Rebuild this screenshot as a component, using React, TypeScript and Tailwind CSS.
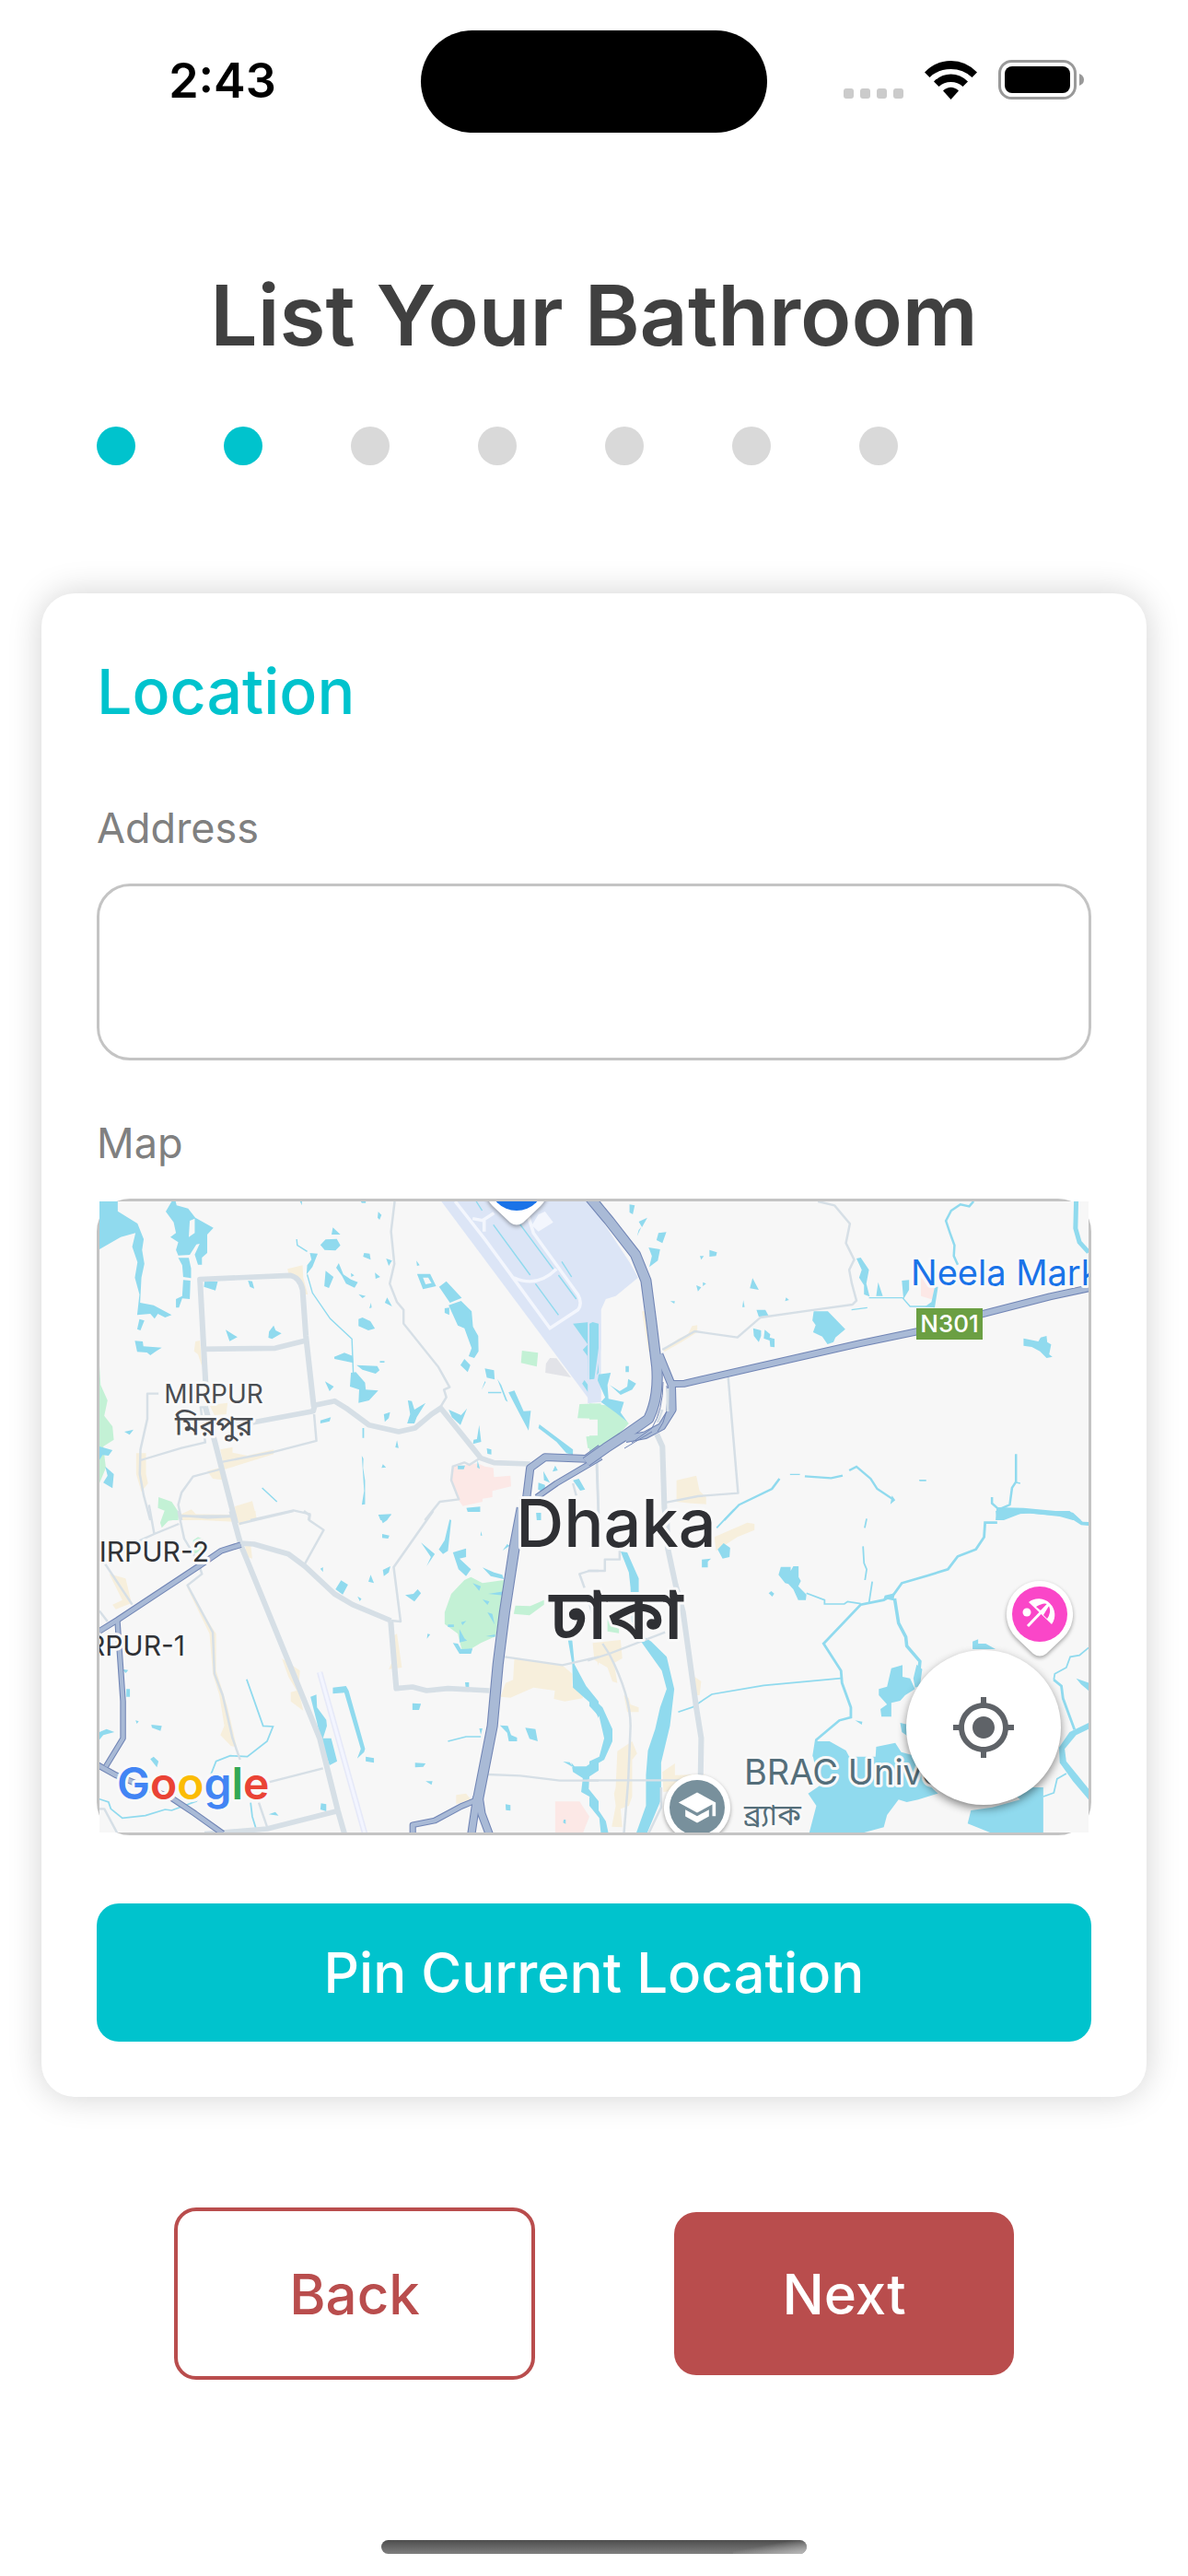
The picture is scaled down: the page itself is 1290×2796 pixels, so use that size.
import { useState } from "react";
import { MdMyLocation, MdSchool } from "react-icons/md";

type Tile = {
  transform: string;
  airport?: string;
  taxiway?: string;
  apron?: string;
  grey?: string;
  green?: string;
  pink?: string;
  cream?: string;
  water: string;
  streams: [number, string][];
  minor: string;
  major: string;
  runway?: string;
  highways: [number, string][];
};

const tiles: Tile[] = [
  {
    transform: "translate(-18 -14) scale(.35714 .33333)",
    airport: "M1090 42H1575V695H1545Z",
    taxiway:
      "M1132 42L1222 165L1420 455L1505 395Q1520 375 1505 345L1370 145L1340 42M1310 290Q1380 325 1440 262M1185 98L1215 104L1250 80M1220 100V140",
    apron: "M1385 85L1405 75L1430 110L1385 140L1365 120Z",
    grey: "M1420 552L1440 553L1484 615L1406 600L1408 570Z",
    green:
      "M1335 528L1384 535L1380 580L1332 568ZM1510 702L1575 700V750L1504 748ZM1530 808L1575 805V855L1535 845ZM50 570L54 640L75 690L65 740L90 775L94 818L62 840L70 910L50 960ZM230 1005L270 1020L292 1055L290 1080H240L250 1050L228 1040Z",
    pink: "M1125 905L1200 895L1222 905L1248 910L1250 940L1300 935L1302 970L1245 985V1005L1215 1010V1020L1155 1034L1140 1010L1120 950Z",
    cream:
      "M622 262L668 250L670 290L684 345L672 345L655 290L625 275ZM342 498L356 495L362 580L350 540L338 530ZM385 705L440 698L436 735L400 738ZM418 850L455 842V860L500 870L580 850V865L430 915ZM378 920L430 905L435 950L395 945ZM162 862H192V930L198 960L178 988L162 930ZM462 1035L515 1018L530 1080H465ZM300 1060L330 1045L345 1062L450 1070V1080H300Z",
    water:
      "M50 42H106V74L166 114L185 165L180 200L187 245L178 290L174 372L215 380L270 412L250 420L228 408L218 424L205 408L165 412L172 345L158 290L166 240L150 190L160 145L115 158L50 198ZM270 42L282 42L285 55L320 65L342 95L397 128L378 150V210L362 225V248L350 248L340 215L355 180L345 182L325 216L290 218L283 200L290 175L266 158L283 145L276 110L252 75ZM325 105L340 98V145L322 158ZM290 226H322L329 260V292L305 288L302 250ZM305 298L327 300L325 360L302 358L292 388H283V360L302 350ZM172 425L187 430L175 462L165 458ZM158 496L182 498L184 514L240 518L222 530L205 543L195 534L165 532ZM370 302L410 303L403 332L368 320ZM502 300L515 302L521 326L508 320ZM434 460L470 484L446 497ZM580 446L586 462L604 472L575 490L564 486L566 466ZM760 127L783 150L756 150ZM738 166L772 164L783 185L768 202L735 200L722 184ZM660 42H666V55ZM845 42h15v5h-12zM898 76L908 86L902 102L896 95ZM690 210L714 212L698 255L680 280L682 250L695 232ZM778 243L792 280L815 296L836 305L826 323L800 310L788 285L770 258ZM738 268L762 288L748 324L734 318ZM855 210L872 212L875 232L852 222ZM922 228L940 235L930 252ZM888 274L904 288L890 294ZM815 275l10 8l-9 5zM838 344L860 350L850 357ZM876 372L878 388L871 390ZM925 355L940 384L918 372ZM850 420L874 432L888 456L868 462L838 448L838 425ZM1014 235L1024 250L1016 252ZM1016 278L1056 278L1074 318L1034 328ZM1034 290L1050 290L1060 308L1042 312ZM1105 302L1152 356L1116 372L1083 320ZM1150 366L1182 400L1186 450L1202 480L1203 530L1190 552L1173 546L1182 520L1160 455L1140 446L1112 380ZM1100 390L1114 388V412L1100 405ZM1160 555L1178 575L1170 598L1148 575ZM1222 586L1250 592L1252 622L1228 616ZM1260 620L1272 640L1292 695L1285 690ZM1232 662h40v5h-40zM1222 628l3 2l-13 26zM1294 664L1312 658L1340 725L1362 724L1355 788L1330 738ZM1388 768L1490 850L1490 868L1470 862L1440 825L1385 780ZM1490 440L1568 432V600L1550 624L1536 620L1534 545L1520 525L1535 508ZM1525 624L1550 660L1540 670L1518 635ZM1112 720L1150 738L1168 716L1148 770L1122 745ZM988 690L1000 692L1008 720L1042 698L1015 745L1008 765L986 765L995 735ZM915 735L934 728L930 748L918 760ZM722 755L754 745L750 758L722 765ZM1205 770L1211 825L1186 832L1188 818L1198 816ZM1228 846L1242 850V866L1230 864ZM764 548L795 535L820 545L822 568L765 555ZM832 575L895 578L902 592L890 603L850 590ZM903 562h14v5h-14zM815 600L830 598L858 632L860 655L898 658L870 690L838 698L840 655L812 645ZM736 628L763 645L750 660ZM126 792L154 785L142 802ZM50 840L90 852L78 870L60 868L50 884ZM68 905L94 930L90 976L62 958L75 935ZM850 780h5v32h-5zM955 820l5 25l-10 -2zM848 870L853 880L852 910L858 950L858 1028L848 1030L855 985ZM912 898l10 10l-14 2zM898 1062L938 1062L920 1080H905ZM1166 1040L1208 1036V1053H1170ZM1140 902l22 0l-4 12l-18 0zM1200 885l7 28l-8 -5zM1436 902l8 16l-16 4zM1400 920L1420 958L1402 950ZM1385 958L1405 965V990L1384 980ZM1490 950L1508 945L1527 980L1512 984ZM1378 1056l15 0v24h-13z",
    streams: [
      [
        4,
        "M650 165L652 185L682 205M682 280L698 340L752 424L818 490L822 600M545 975L590 1020M1196 42L1214 72M1248 118L1360 282M1326 112L1430 262M1376 310L1446 412M1446 282L1500 360M1456 238L1486 288",
      ],
    ],
    minor:
      "M948 42L937 140L947 245L933 310L955 370L975 395V440L1080 580L1115 647L1098 655L1105 680L1088 710M230 668H196V750L175 850L173 930L185 1000L205 1080M175 885L300 845L372 827L358 712H375M703 735L710 822L580 858L425 890M415 915L335 938L300 990L290 1030L300 1080M300 1065L380 1072L450 1068M510 1080L640 1048L690 1060L686 1080M1205 880L1175 900L1160 892L1125 905L1120 950L1143 1012L1085 1020L1040 1080M1563 890L1568 1060M1490 960L1500 1000",
    major:
      "M374 650L356 296L630 283Q660 290 668 330L678 480L702 710M365 523L585 520L678 495M515 762L700 725L705 706L765 692L800 715L870 770L960 792L1010 780L1060 735L1088 715L1210 878L1250 893L1360 897M372 710L400 820L465 1090",
    highways: [
      [26, "M1345 1040L1360 910L1405 875L1530 880L1575 845"],
      [20, "M1380 1005L1440 960L1575 875"],
    ],
  },
  {
    transform: "translate(532 -14) scale(.35714 .33333)",
    airport: "M-5 42V700L35 695V660L20 625L35 520V395L50 360L80 350L148 290L122 240L0 42Z",
    green: "M0 700L70 708L120 765L90 800L0 860V805H25V752H0Z",
    pink: "M1008 290L1048 325L1045 362L1008 350Z",
    cream:
      "M225 525L270 490L300 475L312 448L328 445V468L280 500L228 532ZM265 950L325 935L335 985L355 1005V1028L310 1025L265 1020ZM160 400L170 400L188 530L180 530Z",
    water:
      "M122 52L138 55L132 84L122 78ZM150 108L176 95L160 126ZM158 125L145 155L150 135ZM210 145L234 142L222 178L204 168ZM180 192L215 198L208 235L182 256L190 220ZM365 200L388 208L385 220L365 222ZM336 220h12l-8 12zM325 315L340 322L330 335ZM345 305l10 5l-10 8zM496 292L515 330L488 325ZM246 367h14l-2 8zM468 364l4 22l-7 0zM598 355l9 8l-12 4zM508 395L535 395L545 415L515 418ZM682 400H725L778 458L748 485L742 500L724 507L708 482L680 468L688 445L678 430ZM498 455L522 462V480L515 500L500 480ZM533 460L550 475L548 485L563 490V517L550 515L548 495L530 488ZM812 228L825 225L850 265L842 310L852 352L835 345L835 315L820 290L828 265ZM878 305L892 350L872 350ZM950 300L972 298V330L955 360ZM1050 320h10L1050 388L1020 385L1040 370ZM1320 488L1365 498L1372 485L1390 480L1392 500L1404 508L1398 540L1408 548L1390 552L1370 530L1345 516L1320 512ZM0 440L10 435L28 440V520L15 620L0 622ZM28 605L65 600L55 640L58 685L105 695L95 730L115 760L80 730L35 695L48 680L25 625ZM62 640L92 660L115 645L118 620L142 635L130 655L95 672ZM110 578h10v20h-10zM920 1000L930 1015L915 1028ZM1002 948h22v5h-20zM1238 1038L1320 1040L1470 1055L1495 1080H1470L1430 1068L1320 1055L1260 1080H1235Z",
    streams: [
      [14, "M1480 42L1478 130L1490 175L1518 208"],
      [
        7,
        "M1168 42L1155 58L1128 52L1100 72L1084 105L1098 150L1110 185L1108 220L1120 248M410 1080L455 1030L555 978L578 945M655 937L735 943L770 935M790 918L812 906L855 945L875 978L920 1010M1297 865L1297 955L1285 975L1278 1030L1245 1045L1224 1025V1005",
      ],
      [4, "M850 356H952L975 384H1050M797 395L845 388M610 931h30M1297 957L1310 960"],
    ],
    minor:
      "M695 42L745 55L792 115L780 178L805 232L790 265L798 310L812 365L800 378L685 395L520 420L450 485L320 465L222 525M422 615L452 992L330 1002L235 1022M22 900L28 1080M30 42L60 90",
    major: "M205 800L222 840L228 1040L235 1090",
    highways: [
      [24, "M255 636L290 635L500 583L820 505L1000 465L1190 410L1400 352L1530 322"],
      [26, "M212 540L250 640L252 720L220 775L170 803L110 815"],
      [34, "M-10 15L60 105L140 215L172 300L188 430L205 580Q212 680 180 750L100 810L50 845L-10 890"],
    ],
  },
  {
    transform: "translate(-18 336) scale(.35714 .33333)",
    green:
      "M1180 215L1215 235L1280 225L1285 240L1255 408L1210 430L1155 465L1140 400L1100 368L1100 330L1120 270L1160 225ZM1315 308L1360 310L1402 290V305L1358 340L1310 335ZM335 95L350 85L372 95L370 130L335 140ZM248 0H288V28L260 32L240 55L235 38Z",
    pink: "M1436 946H1510L1540 995L1520 1050H1436Z",
    cream:
      "M80 205L130 220L148 300L100 320L90 305L120 290ZM315 245L390 375L405 400V520L440 640L468 770L450 765L418 730L430 700L415 600L395 530L385 400ZM605 480L660 520L655 580L670 650L632 620V590L650 585L625 540ZM935 410L955 400L970 510L930 515L945 480ZM1312 478L1460 505L1488 530V570L1520 590V610L1465 620L1432 612L1435 585L1370 575L1300 608L1270 605L1285 560L1308 550ZM1135 925L1165 920L1180 940L1135 955ZM300 10L460 12V35L360 30ZM465 0H525V18L475 48ZM490 100L510 110L515 155L500 150ZM1555 460h13v45z",
    water:
      "M900 12L938 10L925 30L912 40ZM910 75L932 80L928 90L910 88ZM1115 28L1120 30L1110 130L1095 140L1082 125L1100 95ZM1028 103L1070 140L1045 180L1058 150ZM1125 135L1165 122V150L1145 155L1180 190L1165 212L1142 190ZM1210 66l4 14l-5 0zM1290 108l8 5l-22 16zM1215 184L1250 200L1275 208L1280 222L1240 212ZM912 192L935 180L930 200L915 212ZM875 208L885 235L868 230ZM722 188l8 -5v16zM785 226L806 240L790 272L768 255ZM835 278l12 8l-5 8zM980 274L1005 270L1018 255L1028 268L1008 295ZM1048 400l8 2l-10 14zM1185 235L1210 245L1205 260ZM1232 270L1280 262V275ZM1215 288L1236 295L1230 306ZM1230 330L1245 335L1252 370ZM1145 385L1160 415L1168 422L1145 428ZM1110 370h18v8h-18zM1150 362l16 -4l-12 14zM1125 430L1140 432L1150 450L1185 448L1180 465H1145ZM1225 408l28 -6v8zM692 605L710 598L712 640L740 680L742 700L730 740L755 740L773 815L750 828L722 740L712 690ZM760 575L800 570L808 585L858 775L855 785L834 806L845 775L795 592L760 595ZM860 800L885 805V820L860 815ZM1162 558l12 0v18l-10 0zM1002 626L1028 628L1022 648H1002ZM1010 820L1042 822L1035 833L1010 835ZM1042 880L1063 880L1060 892ZM1268 698L1292 700L1302 730L1320 738V750L1295 750L1290 722ZM1345 706L1376 710L1383 750L1358 742ZM1205 708h10l-5 20zM1285 955l15 3l0 18l-14 -2zM724 952L740 955V978L722 972ZM565 988L585 980L595 992ZM120 515l18 3l-8 10zM132 580L143 580V605H132ZM160 682l10 3l-6 8zM208 696L240 700L236 716L210 706ZM50 720L72 710L96 720L62 730L50 745ZM205 808L215 800L230 815L225 835ZM1475 420L1488 422L1495 500L1530 570L1568 620V675L1548 630L1490 575L1488 500ZM1485 820L1495 832H1530L1568 805V845L1540 865L1538 905L1568 945V985L1540 930L1515 915L1520 870L1490 850ZM1460 816L1480 818L1490 835L1480 828ZM1462 1005h6v14l-8 -4z",
    streams: [
      [
        5,
        "M498 548L548 700L578 702L560 750L500 800L448 797L405 815L385 870L345 945L270 975L250 972L190 992L120 1000L85 970L78 948L50 938M510 950L515 995L528 1040M1110 750L1165 735L1210 735",
      ],
    ],
    minor:
      "M201 -20L217 75L165 100M217 75L292 42M290 0L308 90L350 165L362 205L318 242L395 395L400 530L425 600L455 740L478 810M300 17L455 16M475 42L640 0M672 0L690 15L688 30L732 62L675 172M1065 0L945 183L966 360L936 357M66 170L150 305M50 325L75 360M1283 475L1458 502L1568 475M1230 858L1330 862L1450 878L1568 878M560 885L730 838M535 950L562 1035M50 970H65L105 1050M1568 195H1540L1510 205L1525 250",
    major:
      "M452 0L480 110L720 740L775 975L795 1050M480 105L520 108L625 140L675 180L765 270L820 305L936 357M936 360L953 578L1002 573L1045 585L1110 578L1236 585M370 1052L560 1035L770 978",
    runway: "M720 525L857 1050",
    highways: [
      [18, "M105 358L122 620V740L70 832"],
      [20, "M40 398L105 355L355 178L420 130L480 110"],
      [20, "M40 824L100 860L270 935L340 985L425 1050"],
      [20, "M1200 940L1150 962L1070 1008L1003 1022V1050"],
      [26, "M1198 930L1181 1054M1205 935L1212 985L1236 1054"],
      [34, "M1335 -10L1312 120L1282 330L1262 500L1245 700L1202 935"],
    ],
  },
  {
    transform: "translate(532 336) scale(.35714 .33333)",
    green: "M55 345L90 340V398L55 392Z",
    cream:
      "M380 85L480 38L502 42V62L450 85L385 130ZM10 430L95 420L100 480L75 495L85 560L70 555L55 510L15 485ZM105 600L120 610L125 630L150 640V655L115 655ZM85 782L130 750L145 790L130 810V930L120 960L95 970L100 1030L68 1028L80 960L75 920L80 900ZM222 850L260 822V860L350 858L340 900L225 915ZM300 480L312 490L320 540L340 555L335 600L318 600Z",
    water:
      "M95 132L115 135L150 220V262L152 400L188 425L235 475L258 580L245 700L218 820V940L175 1050H142L172 960V860L178 780L200 710L215 640L235 580L220 520L160 430L130 400L125 250L120 200ZM0 598L40 640L70 710V750L45 810L0 838V815L30 800L45 740L30 670L0 635ZM0 930L50 1010L58 1050H35L30 1000L0 960ZM408 105L428 120L426 150L405 155L390 125ZM342 158L370 155L360 165V184H342ZM582 182L612 182V195L620 180L636 180V215L643 228L635 245L660 272L658 290L635 290L620 255L605 238L595 235L575 208ZM545 268l8 -7l9 8l-6 10zM1258 0H1460L1500 35L1518 36V48L1495 46L1455 18L1340 8L1300 10L1240 30L1235 0ZM898 275L928 268L925 292L895 285ZM1165 425L1182 418V432L1205 432L1235 450L1165 450ZM918 512L952 502V540L975 545L990 580L960 600L945 618L918 625V670H888L885 645L905 630L880 600V580L905 572ZM808 682L830 686L828 696ZM945 690L985 700L990 750L950 720ZM872 768L930 755L948 785L1000 800L1040 900L1060 920L1000 940L965 948L940 940L905 990L895 1030L825 1050H668L690 960L665 920L700 895L680 800L690 750H730L780 780L790 800L870 800ZM1270 900H1380V1050H1225L1150 1018L1160 975L1225 965L1310 940ZM1480 545L1518 560V585L1495 565ZM1518 690V710L1480 730L1445 775L1450 815L1518 905V940L1470 880L1430 820L1428 770L1460 720ZM995 500L1012 515L1005 570L990 575L985 545Z",
    streams: [
      [10, "M928 285L940 365L962 410L965 440L1005 490L1000 545"],
      [
        8,
        "M1240 38H1203L1200 85L1175 125L1120 148L1090 190L1030 210L950 235L925 272L895 290L825 305L712 432L765 520L768 560L795 640V672L760 682L690 745L682 800M1412 550L1435 570L1440 610L1475 712",
      ],
      [
        5,
        "M660 268L715 290V303L775 303L785 295L825 302M850 300L860 230M838 225L843 190L835 170L832 115M843 25L837 55M270 655L315 638L372 597L530 568L765 545M387 55L440 -5M1518 445L1490 470L1462 475L1450 510L1415 530L1412 550M1450 855L1422 872L1412 918L1380 930",
      ],
    ],
    minor:
      "M-5 195H47V158H92V130M-5 487L60 465L230 395M40 432L60 465Q125 600 125 700L118 880L105 1050M-5 877H350M218 900V965L180 1050M0 300L20 380",
    major: "M235 0L238 120L262 240L285 330L325 640L340 740L338 870",
    highways: [],
  },
];

function MapPin({ x, y, color }: { x: number; y: number; color: string }) {
  return (
    <g transform={`translate(${x} ${y})`}>
      <path
        d="M0-36A36 36 0 0 1 26 25L7 43Q0 48-7 43L-26 25A36 36 0 0 1 0-36Z"
        fill="#fff"
        className="drop-shadow-[0_2px_2px_rgba(0,0,0,0.35)]"
      />
      <circle r="30" fill={color} />
    </g>
  );
}

function BeachGlyph() {
  return (
    <g transform="translate(1021 448)">
      <circle cx="-14" cy="-2" r="4.500" fill="#fff" />
      <path d="M-12 -13A17.500 17.500 0 0 1 13 11Z" fill="#fff" />
      <path d="M-4 -8Q4 -13 8 -11L1 -4ZM4 1L10 -9Q13 -2 8 5Z" fill="#fa46c8" />
      <path d="M-13 13L9 -10" fill="none" stroke="#fff" strokeWidth="3" />
    </g>
  );
}

function DhakaMap() {
  return (
    <svg
      viewBox="0 0 1074 685"
      role="img"
      aria-label="Map of Dhaka"
      className="block h-auto w-full overflow-hidden bg-[#f7f7f7] font-[Inter,'Noto_Sans_Bengali','Noto_Sans',sans-serif]"
    >
      {tiles.map((t) => (
        <g key={t.transform} transform={t.transform}>
          <path d={t.airport} fill="#dce5f6" />
          <path d={t.apron} fill="#f3f6fd" />
          <path d={t.taxiway} fill="none" stroke="#f3f6fd" strokeWidth="10" />
          <path d={t.grey} fill="#e2e3e8" />
          <path d={t.green} fill="#c3f1d5" />
          <path d={t.pink} fill="#fce8e6" />
          <path d={t.cream} fill="#f7efdc" />
          <path d={t.water} fill="#90daee" fillRule="evenodd" />
          {t.streams.map(([w, d]) => (
            <path key={d} d={d} fill="none" stroke="#90daee" strokeWidth={w} />
          ))}
        </g>
      ))}
      {tiles.map((t) => (
        <g key={t.transform} transform={t.transform} fill="none" strokeLinejoin="round">
          <path d={t.minor} stroke="#d6dfe6" strokeWidth="7" />
          <path d={t.major} stroke="#d6dfe6" strokeWidth="17" />
          <path d={t.runway} stroke="#e6e9f8" strokeWidth="18" />
          <path d={t.runway} stroke="#f3f5ff" strokeWidth="9" />
        </g>
      ))}
      {tiles.map((t) => (
        <g key={t.transform} transform={t.transform} fill="none" strokeLinejoin="round">
          {t.highways.map(([w, d]) => (
            <path key={d} d={d} stroke="#7185b5" strokeWidth={w} />
          ))}
          {t.highways.map(([w, d]) => (
            <path key={d} d={d} stroke="#a9bad6" strokeWidth={w - 6} />
          ))}
        </g>
      ))}
      <g fill="none" stroke="#7185b5" strokeWidth="1">
        <path d="M612 196Q612 226 600 246L578 262M616 200Q620 232 606 250M570 268L600 250" />
      </g>
      <path d="M617 203V228M611 226L606 240" fill="none" stroke="#d6dfe6" strokeWidth="3" />

      <MapPin x={453} y={-20} color="#1a73e8" />
      <MapPin x={1021} y={448} color="#fa46c8" />
      <BeachGlyph />
      <MapPin x={649} y={658} color="#78909c" />
      <MdSchool x={627} y={636} size={44} color="#fff" />

      <g stroke="#f9f9f9" strokeWidth="6" strokeLinejoin="round" className="[paint-order:stroke]">
        <g fill="#4a4d52" textAnchor="middle">
          <text x="124" y="219" fontSize="28">MIRPUR</text>
          <text x="124" y="254" fontSize="30" fontWeight="500">মিরপুর</text>
        </g>
        <g fill="#303236" fontSize="30" textAnchor="end">
          <text x="119" y="391">IRPUR-2</text>
          <text x="93" y="493">RPUR-1</text>
        </g>
        <g fill="#2f3034" textAnchor="middle">
          <text x="561" y="375" fontSize="72" fontWeight="500">Dhaka</text>
          <text x="561" y="475" fontSize="76" fontWeight="600">ঢাকা</text>
        </g>
        <text x="881" y="91" fill="#1a73e8" fontSize="38">Neela Mark</text>
        <g fill="#546e7a">
          <text x="700" y="633" fontSize="38">BRAC Unive</text>
          <text x="700" y="677" fontSize="32">ব্র্যাক</text>
        </g>
        <text x="19" y="649" fontSize="48" fontWeight="600">
          <tspan fill="#4285f4">G</tspan>
          <tspan fill="#ea4335">o</tspan>
          <tspan fill="#fbbc04">o</tspan>
          <tspan fill="#4285f4">g</tspan>
          <tspan fill="#34a853">l</tspan>
          <tspan fill="#ea4335">e</tspan>
        </text>
      </g>
      <rect x="887" y="116" width="72" height="34" fill="#6b9f43" />
      <text x="923" y="142" fill="#fff" fontSize="26" fontWeight="500" textAnchor="middle">
        N301
      </text>
    </svg>
  );
}

function StatusBar() {
  return (
    <header className="grid grid-cols-[1fr_376px_1fr] pt-[33px]">
      <div className="flex items-center justify-center pb-0.5 pl-[26px] text-[52px] leading-[60px] font-semibold text-black">
        2:43
      </div>
      <div className="h-[111px] rounded-full bg-black" />
      <div className="flex items-center justify-center gap-[23px] pr-[30px] pb-1">
        <div className="flex gap-[7px] self-end pb-[33px]">
          {[0, 1, 2, 3].map((i) => (
            <span key={i} className="size-[11px] rounded-[3px] bg-[#cbcbcb]" />
          ))}
        </div>
        <svg viewBox="0 0 57 42" className="h-[42px] w-[57px]" aria-label="Wi-Fi">
          <path d="M0 12.500Q12 0 28.500 0T57 12.500L51.500 18Q42 9 28.500 9T5.500 18Z" />
          <path d="M10 22.500Q18 14.500 28.500 14.500T47 22.500L41.500 28Q36 23 28.500 23T15.500 28Z" />
          <path d="M20 32.500Q28.500 25 37 32.500L28.500 42Z" />
        </svg>
        <svg viewBox="0 0 93 43" className="h-[43px] w-[93px]" aria-label="Battery">
          <rect x="1.500" y="1.500" width="82" height="40" rx="13" fill="none" stroke="#999" strokeWidth="3" />
          <rect x="7" y="7" width="71" height="29" rx="8" />
          <path d="M88 15Q93 17 93 21.500T88 28Z" fill="#999" />
        </svg>
      </div>
    </header>
  );
}

export default function App() {
  const [address, setAddress] = useState("");
  const steps = 7;
  const current = 2;

  return (
    <div className="flex min-h-screen flex-col bg-white font-[Inter,sans-serif]">
      <StatusBar />

      <main className="flex flex-1 flex-col">
        <h1 className="mt-[148px] text-center text-[91px] leading-[100px] font-semibold text-[#404040]">
          List Your Bathroom
        </h1>

        <ol className="mt-[71px] flex gap-24 px-[105px]" aria-label={`Step ${current} of ${steps}`}>
          {Array.from({ length: steps }, (_, i) => (
            <li
              key={i}
              className={i < current ? "size-[42px] rounded-full bg-[#00c3cd]" : "size-[42px] rounded-full bg-[#d9d9d9]"}
            />
          ))}
        </ol>

        <section className="mx-[45px] mt-[139px] flex flex-col rounded-[36px] bg-white px-[60px] pt-[70px] pb-[60px] shadow-[0_0_36px_rgba(0,0,0,0.18)]">
          <h2 className="text-[68px] leading-[72px] font-medium text-[#00c3cd]">Location</h2>

          <label htmlFor="address" className="mt-[85px] text-[45px] leading-[56px] text-[#808080]">
            Address
          </label>
          <input
            id="address"
            value={address}
            onChange={(e) => setAddress(e.target.value)}
            className="mt-8 h-[192px] w-full rounded-[36px] border-3 border-[#c4c4c4] px-10 text-[45px] text-[#404040] outline-none"
          />

          <h3 className="mt-[62px] text-[45px] leading-[56px] text-[#808080]">Map</h3>
          <div className="relative mt-8 rounded-[36px] border-3 border-[#c4c4c4]">
            <DhakaMap />
            <button
              type="button"
              aria-label="My location"
              className="absolute right-[30px] bottom-[30px] flex size-[168px] items-center justify-center rounded-full bg-white text-[#5f6368] shadow-[0_4px_10px_rgba(0,0,0,0.45)]"
            >
              <MdMyLocation className="size-[72px]" />
            </button>
          </div>

          <button
            type="button"
            className="mt-[74px] h-[150px] rounded-3xl bg-[#00c3cd] text-[60px] leading-[72px] font-medium text-white"
          >
            Pin Current Location
          </button>
        </section>

        <div className="mt-[120px] flex items-center justify-center gap-[151px] text-[60px] leading-[72px] font-medium">
          <button
            type="button"
            className="h-[187px] w-[392px] rounded-3xl border-4 border-[#b94d4d] bg-white text-[#b94d4d]"
          >
            Back
          </button>
          <button type="button" className="h-[177px] w-[369px] rounded-3xl bg-[#b94d4d] text-white">
            Next
          </button>
        </div>
      </main>

      <div className="mx-auto mb-6 flex h-[15px] w-[462px] justify-end overflow-hidden rounded-full bg-linear-to-b from-[#4d4d4d] to-[#808080]">
        <div className="w-20 bg-linear-to-br from-transparent from-40% to-[#bcbcbc]" />
      </div>
    </div>
  );
}
